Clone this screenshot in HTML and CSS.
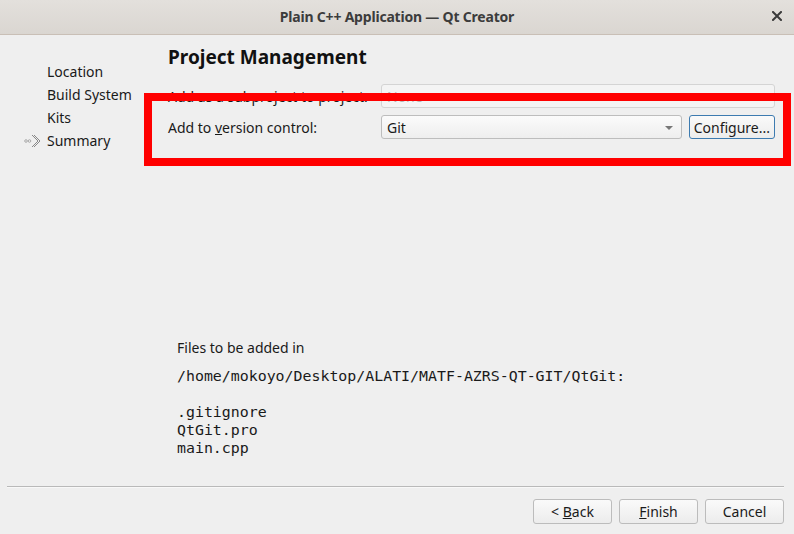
FILE: index.html
```html
<!DOCTYPE html>
<html>
<head>
<meta charset="utf-8">
<link rel="stylesheet" href="styles.css">
</head>
<body>
<div class="window">
  <div class="titlebar">
    <div class="title">Plain C++ Application — Qt Creator</div>
    <div class="close">
      <svg width="10" height="10" viewBox="0 0 10 10"><path d="M1 1 L9 9 M9 1 L1 9" stroke="#3a3a3a" stroke-width="2" stroke-linecap="square"/></svg>
    </div>
  </div>
  <div class="body">
    <div class="sidebar">
      <div class="step">Location</div>
      <div class="step">Build System</div>
      <div class="step">Kits</div>
      <div class="step current">
        <svg class="arrow" width="16" height="14" viewBox="0 0 16 14">
          <circle cx="2" cy="7" r="1.3" fill="none" stroke="#9a9a9a" stroke-width="0.8"/>
          <circle cx="5.5" cy="7" r="1.3" fill="none" stroke="#9a9a9a" stroke-width="0.8"/>
          <path d="M8 1 L14 7 L8 13 M10 1 L16 7 L10 13" fill="none" stroke="#8a8a8a" stroke-width="1"/>
        </svg>
        Summary
      </div>
    </div>
    <div class="content">
      <h1 class="heading">Project Management</h1>
      <div class="form">
        <div class="label">Add as a subproject to project:</div>
        <div class="combo disabled"><span>None</span></div>
        <div class="label">Add to <u>v</u>ersion control:</div>
        <div class="combo-row">
          <div class="combo"><span>Git</span><span class="caret"></span></div>
          <div class="btn focus">Configure...</div>
        </div>
      </div>
      <div class="spacer"></div>
      <div class="files">
        <div class="files-head">Files to be added in</div>
        <pre class="mono">/home/mokoyo/Desktop/ALATI/MATF-AZRS-QT-GIT/QtGit:

.gitignore
QtGit.pro
main.cpp</pre>
      </div>
    </div>
  </div>
  <div class="footer">
    <div class="sep"></div>
    <div class="buttons">
      <div class="btn wide"><span>&lt;&nbsp;<u>B</u>ack</span></div>
      <div class="btn wide"><span><u>F</u>inish</span></div>
      <div class="btn wide"><span>Cancel</span></div>
    </div>
  </div>
  <div class="highlight"></div>
</div>
</body>
</html>
```
FILE: styles.css
```css
* { box-sizing: border-box; }
html, body { margin: 0; padding: 0; }
body {
  width: 794px;
  height: 534px;
  overflow: hidden;
  background: #efefef;
  font-family: "Noto Sans", "DejaVu Sans", sans-serif;
  font-size: 14px;
  color: #1a1a1a;
}
.window { position: relative; width: 794px; height: 534px; display: flex; flex-direction: column; }
.titlebar {
  height: 35px;
  background: linear-gradient(#e3e0dc, #dad6d1);
  border-bottom: 1px solid #c9bfb6;
  display: flex;
  align-items: center;
  justify-content: center;
  position: relative;
  flex: none;
}
.title { font-weight: bold; font-size: 14px; color: #3c3c3c; letter-spacing: -0.2px; margin-top: -2px; }
.close { position: absolute; right: 12px; top: 11px; width: 10px; height: 10px; display: flex; }
.body { display: flex; flex: 1; }
.sidebar { width: 168px; padding-top: 25px; }
.step { height: 23px; line-height: 23px; padding-left: 47px; position: relative; color: #1a1a1a; }
.arrow { position: absolute; left: 24px; top: 5px; }
.content { flex: 1; display: flex; flex-direction: column; padding-top: 9px; padding-right: 19px; }
.heading { margin: 0; font-size: 19px; font-weight: bold; line-height: 26px; color: #111; }
.form {
  margin-top: 14px;
  display: grid;
  grid-template-columns: 213px 1fr;
  row-gap: 7px;
  align-items: center;
}
.label { color: #1a1a1a; }
.combo {
  height: 24px;
  border: 1px solid #bdbdbd;
  border-radius: 3px;
  background: linear-gradient(#fbfbfb, #eeeeee);
  display: flex;
  align-items: center;
  padding-left: 5px;
  position: relative;
  flex: 1;
}
.combo.disabled { background: #f4f4f4; border-color: #d4d4d4; color: #b8b8b8; }
.caret {
  position: absolute; right: 8px; top: 10px;
  width: 0; height: 0;
  border-left: 4px solid transparent; border-right: 4px solid transparent;
  border-top: 4px solid #777;
}
.combo-row { display: flex; gap: 7px; }
.btn {
  height: 24px;
  border: 1px solid #bcbcbc;
  border-radius: 3px;
  background: linear-gradient(#fafafa, #ececec);
  display: flex; align-items: center; justify-content: center;
  padding: 0 4px;
  color: #1a1a1a;
}
.btn.focus { border-color: #3d7bb0; }
.spacer { flex: 1; }
.files { padding-left: 9px; padding-bottom: 29px; }
.files-head { line-height: 20px; margin-bottom: 9px; }
.mono {
  margin: 0;
  font-family: "DejaVu Sans Mono", monospace;
  font-size: 14.9px;
  line-height: 18px;
  color: #1a1a1a;
}
.footer { height: 48px; padding: 0 10px 0 7px; flex: none; }
.sep { height: 2px; border-top: 1px solid #b9b9b9; border-bottom: 1px solid #f8f8f8; }
.buttons { display: flex; justify-content: flex-end; gap: 7px; margin-top: 11px; }
.btn.wide { width: 79px; height: 25px; }
.highlight {
  position: absolute;
  left: 144px; top: 93px;
  width: 647px; height: 73px;
  border: 8px solid #ff0000;
  pointer-events: none;
}
```
